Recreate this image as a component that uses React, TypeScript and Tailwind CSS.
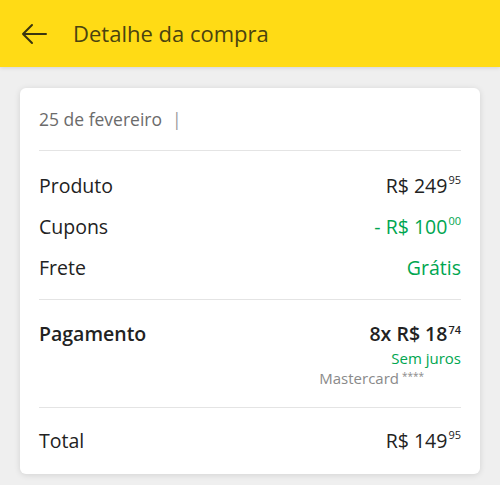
import React from "react";

function Price({ main, cents, className = "" }: { main: string; cents: string; className?: string }) {
  return (
    <span className={`inline-flex items-start ${className}`}>
      <span>{main}</span>
      <span className="text-[11px] leading-none mt-[3px] ml-[1px]">{cents}</span>
    </span>
  );
}

export default function App() {
  return (
    <div
      className="w-[500px] h-[485px] bg-[#efefef] overflow-hidden"
      style={{ fontFamily: "'Open Sans', Lato, sans-serif" }}
    >
      <div className="h-[67px] bg-[#ffdb15] flex items-center shadow-[0_1px_4px_rgba(0,0,0,0.12)] relative">
        <svg width="26" height="22" viewBox="0 0 26 22" className="ml-[21px]" fill="none" stroke="#3a3510" strokeWidth="2" strokeLinecap="round" strokeLinejoin="round">
          <path d="M25 11H2M11 2L2 11l9 9" />
        </svg>
        <span className="ml-[26px] text-[22px] text-[#4a4310]">Detalhe da compra</span>
      </div>
      <div className="mx-[20px] mt-[21px] bg-white rounded-[6px] shadow-[0_1px_6px_rgba(0,0,0,0.12)] px-[19px]">
        <div className="h-[62px] flex items-center text-[17.5px] text-[#6b6b6b]">
          25 de fevereiro <span className="ml-[10px] text-[#9a9a9a]">|</span>
        </div>
        <div className="h-px bg-[#e4e4e4]" />
        <div className="pt-[22px] pb-[19px] flex flex-col gap-[16px] text-[19.5px] text-[#222]">
          <div className="flex justify-between items-center h-[25px]">
            <span>Produto</span>
            <Price main="R$ 249" cents="95" />
          </div>
          <div className="flex justify-between items-center h-[25px]">
            <span>Cupons</span>
            <Price main="- R$ 100" cents="00" className="text-[#00a650]" />
          </div>
          <div className="flex justify-between items-center h-[25px]">
            <span>Frete</span>
            <span className="text-[#00a650]">Grátis</span>
          </div>
        </div>
        <div className="h-px bg-[#e4e4e4]" />
        <div className="pt-[21px] pb-[19px] flex justify-between text-[19.5px] text-[#222]">
          <span className="font-semibold leading-[25px]">Pagamento</span>
          <div className="flex flex-col items-end">
            <Price main="8x R$ 18" cents="74" className="font-semibold leading-[25px]" />
            <span className="text-[15px] text-[#00a650] leading-[20px] mt-[2px]">Sem juros</span>
            <span className="text-[15px] text-[#8a8a8a] leading-[20px] mr-[37px] inline-flex items-start">
              Mastercard<span className="text-[10px] leading-none ml-[3px] mt-[3px]">****</span>
            </span>
          </div>
        </div>
        <div className="h-px bg-[#e4e4e4]" />
        <div className="h-[66px] flex justify-between items-center text-[19.5px] text-[#222]">
          <span>Total</span>
          <Price main="R$ 149" cents="95" />
        </div>
      </div>
    </div>
  );
}
